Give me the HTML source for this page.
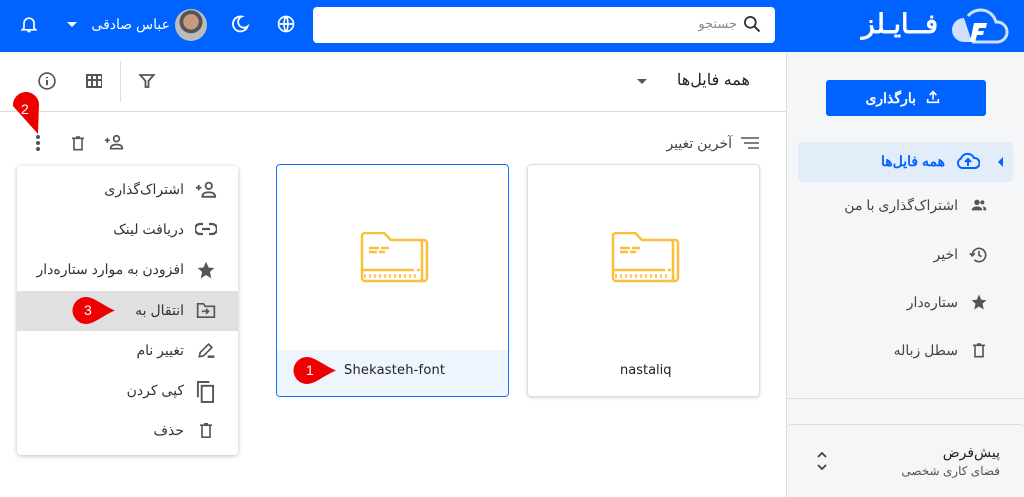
<!DOCTYPE html>
<html><head><meta charset="utf-8"><style>
*{margin:0;padding:0;box-sizing:border-box}
body{width:1024px;height:497px;overflow:hidden;background:#fff;font-family:"Liberation Sans","Noto Sans CJK SC",sans-serif;position:relative;color:#333}
.a{position:absolute}
.t{position:absolute;white-space:nowrap;direction:rtl;font-size:14px;color:#333;line-height:18px}
svg{position:absolute}
</style></head><body>
<!-- header -->
<div class="a" style="left:0;top:0;width:1024px;height:52px;background:#0062ff"></div>
<svg style="left:950px;top:6px" width="60" height="40" viewBox="0 0 60 40"><path d="M22 36 H48 A10 10 0 0 0 46 16 A16 16 0 0 0 18 10" fill="none" stroke="#cfe0ff" stroke-width="3"/><path d="M14 36 A12 12 0 0 1 14 12 L22 36Z" fill="#cfe0ff"/><path d="M20 36 L24 17 L37 17 L36 22 L29 22 L28 25 L34 25 L33 29 L27 29 L25 36Z" fill="#fff"/></svg>
<div class="t" style="right:86px;top:8px;font-size:27px;line-height:32px;font-weight:bold;color:#fff">فــایـلز</div>
<div class="a" style="left:313px;top:7px;width:462px;height:36px;background:#fff;border-radius:4px"></div>
<div class="t" style="right:287px;top:15px;color:#888;font-size:13px">جستجو</div>
<svg style="left:742px;top:14px" width="20" height="20" viewBox="0 0 24 24"><circle cx="10" cy="10" r="6.5" fill="none" stroke="#333" stroke-width="2.2"/><path d="M15 15l6 6" stroke="#333" stroke-width="2.4"/></svg>
<svg style="left:276px;top:14px" width="20" height="20" viewBox="0 0 24 24" fill="none" stroke="#fff" stroke-width="2"><circle cx="12" cy="12" r="9"/><path d="M3 12h18M12 3c-3 3-3 15 0 18M12 3c3 3 3 15 0 18"/></svg>
<svg style="left:230px;top:14px" width="20" height="20" viewBox="0 0 24 24"><path d="M14 3 A9 9 0 1 0 21 15 A7 7 0 1 1 14 3Z" fill="none" stroke="#fff" stroke-width="2.2"/></svg>
<div class="a" style="left:175px;top:9px;width:32px;height:32px;border-radius:50%;background:radial-gradient(circle at 50% 40%,#c89a80 0 30%,#555 32% 45%,#bbb 47%)"></div>
<div class="t" style="right:854px;top:15px;color:#fff;font-size:14px">عباس صادقی</div>
<div class="a" style="left:67px;top:22px;border:5px solid transparent;border-top-color:#fff"></div>
<svg style="left:19px;top:13px" width="20" height="22" viewBox="0 0 24 24"><path d="M6 17V11a6 6 0 0 1 12 0v6l2 2H4z" fill="none" stroke="#fff" stroke-width="2"/><path d="M10 21h4" stroke="#fff" stroke-width="2"/></svg>
<!-- sidebar -->
<div class="a" style="left:786px;top:52px;width:238px;height:445px;background:#f5f6f8;border-left:1px solid #dcdcdc"></div>
<div class="a" style="left:826px;top:80px;width:160px;height:36px;background:#0062ff;border-radius:3px"></div>
<div class="t" style="right:108px;top:89px;color:#fff;font-weight:bold">بارگذاری</div>
<svg style="left:925px;top:89px" width="16" height="16" viewBox="0 0 24 24" fill="none" stroke="#fff" stroke-width="2.4"><path d="M12 16V4M7 9l5-5 5 5M4 15v5h16v-5"/></svg>
<div class="a" style="left:798px;top:142px;width:215px;height:40px;background:#e3edfa;border-radius:4px"></div>
<div class="t" style="right:79px;top:152px;color:#0062ff;font-weight:bold">همه فایل‌ها</div>
<svg style="left:956px;top:152px" width="24" height="18" viewBox="0 0 24 18"><path d="M6 16A5 5 0 0 1 5 6.5 A7 7 0 0 1 18 6 A5 5 0 0 1 19 16Z" fill="none" stroke="#0062ff" stroke-width="2"/><path d="M12 14V8M9 10l3-3 3 3" stroke="#0062ff" stroke-width="2" fill="none"/></svg>
<div class="a" style="left:998px;top:157px;border:5px solid transparent;border-right-color:#0062ff;border-left:0"></div>
<div class="t" style="right:66px;top:196px;color:#444">اشتراک‌گذاری با من</div>
<svg style="left:970px;top:197px" width="18" height="16" viewBox="0 0 24 24" fill="#555"><circle cx="9" cy="8" r="4"/><path d="M1 20c0-4 4-6 8-6s8 2 8 6z"/><circle cx="17" cy="8" r="3"/><path d="M18 14c3 0 5 2 5 6h-4z"/></svg>
<div class="t" style="right:66px;top:245px;color:#444">اخیر</div>
<svg style="left:969px;top:245px" width="20" height="20" viewBox="0 0 24 24" fill="none" stroke="#555" stroke-width="2"><path d="M4 12a8 8 0 1 1 2.5 5.8"/><path d="M1 10l3 3 3-3M12 7v5l3 2"/></svg>
<div class="t" style="right:66px;top:293px;color:#444">ستاره‌دار</div>
<svg style="left:970px;top:293px" width="18" height="18" viewBox="0 0 24 24" fill="#555"><path d="M12 2l3 7 7 .6-5.3 4.6L18.3 22 12 18l-6.3 4 1.6-7.8L2 9.6 9 9z"/></svg>
<div class="t" style="right:66px;top:341px;color:#444">سطل زباله</div>
<svg style="left:971px;top:341px" width="16" height="18" viewBox="0 0 24 24" fill="none" stroke="#555" stroke-width="2.4"><path d="M3 5h18M9 3h6M6 6v16h12V6"/></svg>
<div class="a" style="left:787px;top:398px;width:237px;border-top:1px solid #dcdcdc"></div>
<div class="a" style="left:787px;top:424px;width:237px;height:73px;border-top:1px solid #dcdcdc;border-radius:4px 4px 0 0"></div>
<div class="t" style="right:24px;top:443px;color:#222;font-size:14px">پیش‌فرض</div>
<div class="t" style="right:24px;top:462px;color:#555;font-size:12px">فضای کاری شخصی</div>
<svg style="left:815px;top:450px" width="14" height="22" viewBox="0 0 14 22" fill="none" stroke="#444" stroke-width="1.8"><path d="M3 7l4-4 4 4M3 15l4 4 4-4"/></svg>
<!-- toolbar -->
<div class="t" style="right:274px;top:71px;font-size:16px;line-height:20px;color:#222">همه فایل‌ها</div>
<div class="a" style="left:637px;top:79px;border:5px solid transparent;border-top-color:#555"></div>
<svg style="left:138px;top:72px" width="18" height="18" viewBox="0 0 24 24"><path d="M3 4h18l-7 8v8h-4v-8z" fill="none" stroke="#555" stroke-width="2.4"/></svg>
<div class="a" style="left:120px;top:61px;height:41px;border-left:1px solid #ddd"></div>
<svg style="left:85px;top:73px" width="18" height="16" viewBox="0 0 18 16" fill="#555"><path d="M1 1h16v14H1zM3 3v3h3V3zm5 0v3h3V3zm5 0v3h3V3zM3 8v5h3V8zm5 0v5h3V8zm5 0v5h3V8z" fill-rule="evenodd"/></svg>
<svg style="left:37px;top:71px" width="20" height="20" viewBox="0 0 24 24" fill="none" stroke="#555" stroke-width="2"><circle cx="12" cy="12" r="9.5"/><path d="M12 11v6M12 7v1.5" stroke-width="2.4"/></svg>
<div class="a" style="left:0;top:111px;width:786px;border-top:1px solid #ddd"></div>
<div class="t" style="right:292px;top:134px;color:#444">آخرین تغییر</div>
<svg style="left:741px;top:137px" width="18" height="12" viewBox="0 0 18 12" stroke="#555" stroke-width="1.6"><path d="M0 1h18M3 6h15M7 11h11"/></svg>
<svg style="left:104px;top:133px" width="20" height="18" viewBox="0 0 24 20" fill="none" stroke="#555" stroke-width="2"><circle cx="15" cy="6" r="3.5"/><path d="M8 18c0-4 3-5 7-5s7 1 7 5z"/><path d="M1 8h6M4 5v6"/></svg>
<svg style="left:70px;top:134px" width="16" height="18" viewBox="0 0 24 24" fill="none" stroke="#555" stroke-width="2.4"><path d="M3 5h18M9 3h6M6 6v16h12V6"/></svg>
<svg style="left:35px;top:134px" width="6" height="18" viewBox="0 0 6 18" fill="#555"><circle cx="3" cy="3" r="2"/><circle cx="3" cy="9" r="2"/><circle cx="3" cy="15" r="2"/></svg>
<svg style="left:11px;top:92px" width="30" height="44" viewBox="0 0 30 44"><path d="M2 14A13 13 0 0 1 28 12L27 42Z" fill="#e00"/></svg>
<div class="a" style="left:21px;top:101px;color:#fff;font-size:14px">2</div>
<!-- menu -->
<div class="a" style="left:17px;top:166px;width:221px;height:289px;background:#fff;border-radius:4px;box-shadow:0 1px 5px rgba(0,0,0,.25)"></div>
<div class="a" style="left:17px;top:291px;width:221px;height:40px;background:#e0e0e0"></div>
<div class="t" style="right:840px;top:180px">اشتراک‌گذاری</div>
<div class="t" style="right:840px;top:220px">دریافت لینک</div>
<div class="t" style="right:840px;top:260px">افزودن به موارد ستاره‌دار</div>
<div class="t" style="right:840px;top:301px">انتقال به</div>
<div class="t" style="right:840px;top:341px">تغییر نام</div>
<div class="t" style="right:840px;top:381px">کپی کردن</div>
<div class="t" style="right:840px;top:421px">حذف</div>
<svg style="left:195px;top:180px" width="22" height="19" viewBox="0 0 24 20" fill="none" stroke="#555" stroke-width="2"><circle cx="15" cy="6" r="3.5"/><path d="M8 18c0-4 3-5 7-5s7 1 7 5z"/><path d="M1 8h6M4 5v6"/></svg>
<svg style="left:195px;top:222px" width="22" height="14" viewBox="0 0 22 14" fill="none" stroke="#555" stroke-width="2.2"><path d="M8 2H5a5 5 0 0 0 0 10h3M14 2h3a5 5 0 0 1 0 10h-3M7 7h8"/></svg>
<svg style="left:196px;top:260px" width="20" height="20" viewBox="0 0 24 24" fill="#555"><path d="M12 2l3 7 7 .6-5.3 4.6L18.3 22 12 18l-6.3 4 1.6-7.8L2 9.6 9 9z"/></svg>
<svg style="left:196px;top:302px" width="20" height="17" viewBox="0 0 24 20" fill="none" stroke="#555" stroke-width="2"><path d="M2 2h7l2 3h11v13H2z"/><path d="M7 11h8M12 8l3 3-3 3"/></svg>
<svg style="left:196px;top:340px" width="20" height="20" viewBox="0 0 24 24" fill="none" stroke="#555" stroke-width="2"><path d="M4 20l1-5L15 5l4 4L9 19z"/><path d="M14 20h8" stroke-width="3"/></svg>
<svg style="left:196px;top:380px" width="19" height="23" viewBox="0 0 20 24" fill="none" stroke="#555" stroke-width="2"><path d="M2 18V2h12"/><rect x="6" y="6" width="12" height="17"/></svg>
<svg style="left:198px;top:421px" width="16" height="19" viewBox="0 0 24 24" fill="none" stroke="#555" stroke-width="2.4"><path d="M3 4h18M9 2h6M6 5v17h12V5"/></svg>
<svg style="left:72px;top:296px" width="44" height="29" viewBox="0 0 44 29"><path d="M14 1A13 13 0 1 0 14 28C22 28 30 20 43 14.5 30 9 22 1 14 1Z" fill="#e00"/></svg>
<div class="a" style="left:84px;top:302px;color:#fff;font-size:14px">3</div>
<!-- cards -->
<div class="a" style="left:276px;top:164px;width:233px;height:233px;border:1px solid #1a6dff;border-radius:4px;overflow:hidden"><div class="a" style="left:0;top:185px;width:233px;height:48px;background:#eef5fe"></div></div>
<div class="a" style="left:527px;top:164px;width:233px;height:233px;border:1px solid #ddd;border-radius:4px;box-shadow:0 1px 3px rgba(0,0,0,.15)"></div>
<svg style="left:360px;top:232px" width="69" height="52" viewBox="0 0 69 52" fill="none" stroke="#fbbf3c" stroke-width="2.5"><path d="M2 4a3 3 0 0 1 3-3h19l7 7h28a3 3 0 0 1 3 3v38H5a3 3 0 0 1-3-3z"/><path d="M61 8h3a3 3 0 0 1 3 3v35a3 3 0 0 1-3 3h-5"/><path d="M9 16h10M21 16h8M9 20h8M19 20h6M2 38h52M57 38h3"/><path d="M5 42v4M10 42v4M15 42v4M20 42v4M25 42v4M30 42v4M35 42v4M40 42v4M45 42v4M50 42v4M55 42v4" stroke-width="1.6"/></svg>
<svg style="left:611px;top:232px" width="69" height="52" viewBox="0 0 69 52" fill="none" stroke="#fbbf3c" stroke-width="2.5"><path d="M2 4a3 3 0 0 1 3-3h19l7 7h28a3 3 0 0 1 3 3v38H5a3 3 0 0 1-3-3z"/><path d="M61 8h3a3 3 0 0 1 3 3v35a3 3 0 0 1-3 3h-5"/><path d="M9 16h10M21 16h8M9 20h8M19 20h6M2 38h52M57 38h3"/><path d="M5 42v4M10 42v4M15 42v4M20 42v4M25 42v4M30 42v4M35 42v4M40 42v4M45 42v4M50 42v4M55 42v4" stroke-width="1.6"/></svg>
<div class="a" style="left:344px;top:363px;font-size:13px;color:#222;font-family:'DejaVu Sans',sans-serif;letter-spacing:.2px">Shekasteh-font</div>
<div class="a" style="left:620px;top:363px;font-size:13px;color:#222;font-family:'DejaVu Sans',sans-serif">nastaliq</div>
<svg style="left:293px;top:356px" width="44" height="29" viewBox="0 0 44 29"><path d="M14 1A13 13 0 1 0 14 28C22 28 30 20 43 14.5 30 9 22 1 14 1Z" fill="#e00"/></svg>
<div class="a" style="left:306px;top:362px;color:#fff;font-size:14px">1</div>
</body></html>
